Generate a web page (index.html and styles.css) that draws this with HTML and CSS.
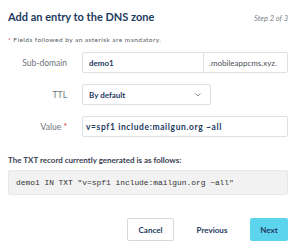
FILE: index.html
```html
<!DOCTYPE html>
<html lang="en">

<head>
    <meta charset="UTF-8">
    <title>DNS zone</title>
    <link rel="stylesheet" href="styles.css">
</head>

<body>
    <div class="header">
        <h1>Add an entry to the DNS zone</h1>
        <span class="step">Step 2 of 3</span>
    </div>

    <p class="note"><span class="req">*</span> Fields followed by an asterisk are mandatory.</p>

    <div class="form">
        <label class="label">Sub-domain</label>
        <div class="field field-wide">
            <div class="input">demo1</div>
            <div class="addon">.mobileappcms.xyz.</div>
        </div>

        <label class="label">TTL</label>
        <div class="field field-select">
            <div class="input">By default</div>
            <svg class="chevron" width="6" height="4" viewBox="0 0 6 4">
                <path d="M0.5 0.5 L3 3 L5.5 0.5" fill="none" stroke="#8a8f99" stroke-width="1" />
            </svg>
        </div>

        <label class="label">Value <span class="req">*</span></label>
        <div class="field field-wide">
            <div class="input input-value">v=spf1 include:mailgun.org ~all</div>
        </div>
    </div>

    <h2>The TXT record currently generated is as follows:</h2>
    <pre class="record">demo1 IN TXT "v=spf1 include:mailgun.org ~all"</pre>

    <div class="actions">
        <button class="btn btn-cancel">Cancel</button>
        <button class="btn btn-link">Previous</button>
        <button class="btn btn-next">Next</button>
    </div>
</body>

</html>
```

FILE: styles.css
```css
body {
    margin: 0;
    padding: 0 12px 0 8px;
    background: #fff;
    font-family: Lato, "Open Sans", sans-serif;
    color: #1d3a5f;
}

.header {
    display: flex;
    justify-content: space-between;
    align-items: baseline;
    padding-top: 10px;
    height: 16px;
}

.header h1 {
    margin: 0;
    font-size: 11px;
    font-weight: 700;
    color: #1d3a5f;
}

.step {
    font-size: 7.5px;
    font-style: italic;
    color: #7d8189;
}

.note {
    margin: 10px 0 0;
    font-size: 6.5px;
    letter-spacing: 0.45px;
    line-height: 8px;
    color: #555a63;
}

.req {
    color: #e0343b;
}

.form {
    display: grid;
    grid-template-columns: 59px 1fr;
    column-gap: 15px;
    row-gap: 11px;
    align-items: center;
    margin-top: 8px;
}

.label {
    text-align: right;
    font-size: 8.5px;
    color: #6e737c;
}

.field {
    display: flex;
    height: 21px;
    border: 1px solid #dcdfe3;
    border-radius: 2px;
    box-sizing: border-box;
    align-items: center;
}

.field-select {
    width: 129px;
    padding-right: 9px;
}

.input {
    flex: 1;
    padding-left: 6px;
    font-size: 8px;
    font-weight: 700;
    color: #1d3a5f;
}

.input-value {
    padding-left: 3px;
    font-size: 8.5px;
    letter-spacing: 0.6px;
}

.addon {
    height: 100%;
    display: flex;
    align-items: center;
    padding: 0 5px;
    border-left: 1px solid #dcdfe3;
    font-size: 8px;
    color: #4a4f58;
    width: 84px;
    box-sizing: border-box;
}

h2 {
    margin: 18px 0 0;
    font-size: 8px;
    font-weight: 700;
    color: #3b3f52;
    line-height: 10px;
}

.record {
    margin: 5px 0 0;
    height: 25px;
    box-sizing: border-box;
    padding: 0 7px;
    display: flex;
    align-items: center;
    background: #f2f2f2;
    border: 1px solid #e8e8e8;
    border-radius: 2px;
    font-family: "Liberation Mono", monospace;
    font-size: 7.9px;
    color: #333;
}

.actions {
    display: flex;
    justify-content: flex-end;
    align-items: center;
    margin-top: 23px;
}

.btn {
    height: 23px;
    border-radius: 2px;
    font-family: Lato, "Open Sans", sans-serif;
    font-size: 8px;
    font-weight: 700;
    color: #1d3a5f;
    cursor: pointer;
    box-sizing: border-box;
}

.btn-cancel {
    width: 47px;
    background: #fff;
    border: 1px solid #d6d9dd;
}

.btn-link {
    width: 76px;
    background: none;
    border: none;
}

.btn-next {
    width: 38px;
    background: #5dd4ee;
    border: none;
}
```
